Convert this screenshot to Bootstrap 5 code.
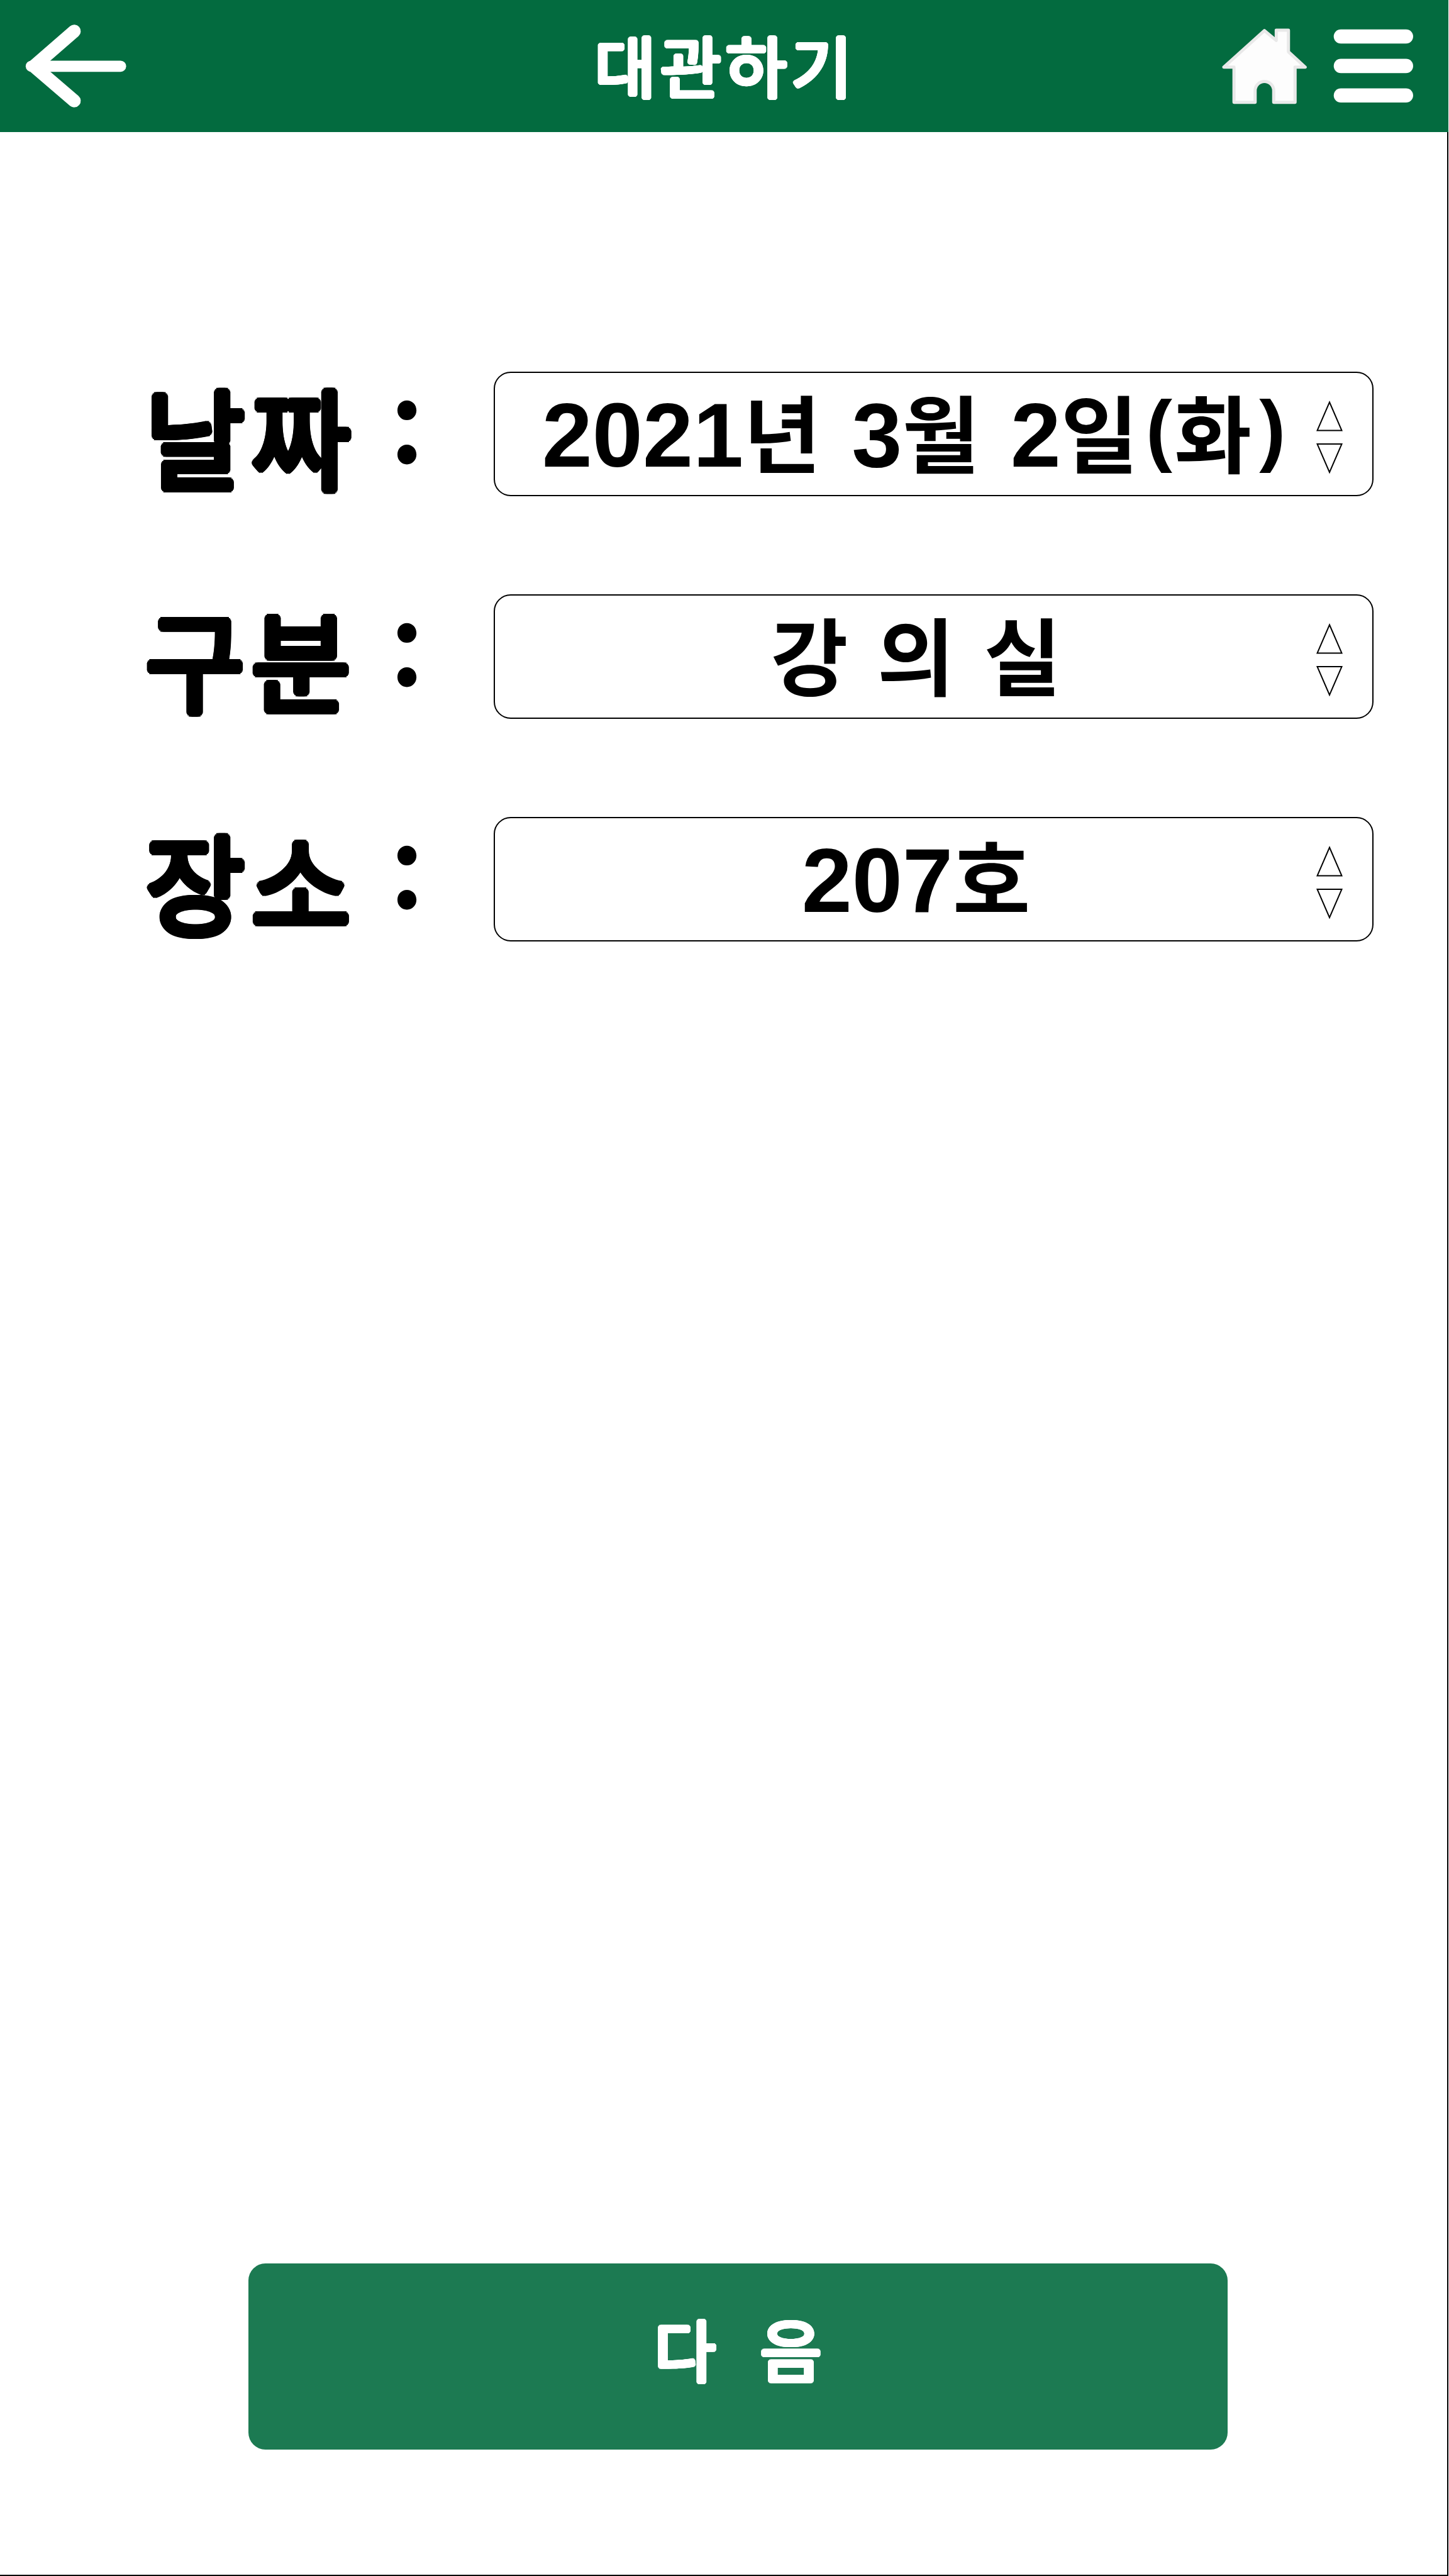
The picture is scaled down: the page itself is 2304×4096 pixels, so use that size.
<!DOCTYPE html>
<html lang="ko">
<head>
<meta charset="utf-8">
<meta name="viewport" content="width=device-width, initial-scale=1">
<title>대관하기</title>
<link rel="stylesheet" href="https://cdn.jsdelivr.net/npm/bootstrap@5.3.0/dist/css/bootstrap.min.css">
<style>
  body { font-family: "Noto Sans CJK KR", sans-serif; color: #000; background: #fff; }
  .screen { height: 4096px; width: 2303px; }
  .topbar { height: 210px; background: #036b3f; padding: 0 56px 0 37px; flex: none; }
  .topbar-side { flex: 1 1 0; }
  .topbar-title { font-size: 106px; letter-spacing: 6.5px; line-height: 203px; height: 210px; margin-left: 23px; }
  .content { border-right: 2px solid #000; border-bottom: 2px solid #000; padding: 381px 117px 199px 229px; }
  .form-rows { gap: 156px; }
  /* Rounded lettering: a regular weight thickened evenly in every direction */
  .soft-bold {
    --r: 6px; --d: calc(var(--r) * .707); --a: calc(var(--r) * .924); --b: calc(var(--r) * .383);
    font-weight: 400;
    text-shadow: var(--r) 0, calc(var(--r) * -1) 0, 0 var(--r), 0 calc(var(--r) * -1),
      var(--d) var(--d), calc(var(--d) * -1) var(--d), var(--d) calc(var(--d) * -1), calc(var(--d) * -1) calc(var(--d) * -1),
      var(--a) var(--b), calc(var(--a) * -1) var(--b), var(--a) calc(var(--b) * -1), calc(var(--a) * -1) calc(var(--b) * -1),
      var(--b) var(--a), calc(var(--b) * -1) var(--a), var(--b) calc(var(--a) * -1), calc(var(--b) * -1) calc(var(--a) * -1);
  }
  .soft-sm { --r: 3.4px; }
  .field-name { width: 388px; padding-left: 2px; font-size: 172px; letter-spacing: 10px; line-height: 198px; }
  .field-colon { width: 60px; margin-right: 108px; margin-bottom: 14px; font-size: 142px; font-weight: 900; line-height: 142px; }
  .picker { height: 198px; border: 2px solid #000; border-radius: 27px; padding: 0 47px 0 42px; background: #fff; }
  .picker-value { font-family: "Liberation Sans", "Noto Sans CJK KR", sans-serif; font-size: 144px; font-weight: 700; line-height: 188px; padding-top: 6px; }
  .value-date { margin-right: 13px; }
  .hangul { font-size: 134px; letter-spacing: 9px; word-spacing: -9px; line-height: 0; }
  .paren { font-size: 126px; vertical-align: 16px; padding: 0 3px; line-height: 0; }
  .stepper { width: 42px; height: 121px; margin-top: 10px; flex: none; }
  .next-btn { width: 1557px; height: 296px; margin-left: 166px; border: 0; border-radius: 27px; background: #1c7a52; color: #fff; font-size: 107px; word-spacing: 5px; line-height: 267px; padding: 0 0 29px; }
  .next-btn:hover { background: #1c7a52; color: #fff; }
</style>
</head>
<body>
<div class="screen d-flex flex-column">
  <header class="topbar d-flex align-items-center text-white">
    <div class="topbar-side d-flex">
      <svg width="168" height="140" viewBox="48 45.4 218.75 182.3" fill="none" stroke="#fff" stroke-linecap="round" stroke-linejoin="round" aria-label="뒤로">
        <path stroke-width="23" d="M64.5 137H249.5"/>
        <path stroke-width="27" d="M153.5 64.5L70 137L153.5 208.5"/>
      </svg>
    </div>
    <h1 class="topbar-title soft-bold soft-sm mb-0 text-nowrap">대관하기</h1>
    <div class="topbar-side d-flex justify-content-end align-items-center">
      <svg width="306" height="130" viewBox="2528 52.3 398.44 169.27" aria-label="홈, 메뉴">
        <path fill="#fdfdfd" stroke="#e9e9e9" stroke-width="6.5" stroke-linejoin="round" d="M2618.5 63.5L2643 84V62.7H2668.3V107.5L2703 139.3H2682V212H2637.7V188A19.2 19.2 0 0 0 2599.3 188V212H2555.5V139.3H2534.3Z"/>
        <g fill="#fff">
          <rect x="2762" y="61" width="164.4" height="29.5" rx="14.7"/>
          <rect x="2762" y="122" width="164.4" height="29.5" rx="14.7"/>
          <rect x="2762" y="183" width="164.4" height="29.5" rx="14.7"/>
        </g>
      </svg>
    </div>
  </header>

  <main class="content flex-grow-1 d-flex flex-column justify-content-between">
    <div class="form-rows d-flex flex-column">
      <div class="d-flex align-items-center">
        <div class="field-name soft-bold text-nowrap">날짜</div>
        <div class="field-colon text-center">:</div>
        <div class="picker flex-grow-1 d-flex align-items-center">
          <div class="picker-value value-date flex-grow-1 text-center text-nowrap">2021<span class="hangul">년</span> 3<span class="hangul">월</span> 2<span class="hangul">일</span><span class="paren">(</span><span class="hangul">화</span><span class="paren">)</span></div>
          <svg class="stepper" viewBox="0 0 42 121" fill="none" stroke="#000" stroke-width="2"><path d="M21 4.5L40.5 49.5H1.5ZM1.5 71H40.5L21 116Z"/></svg>
        </div>
      </div>
      <div class="d-flex align-items-center">
        <div class="field-name soft-bold text-nowrap">구분</div>
        <div class="field-colon text-center">:</div>
        <div class="picker flex-grow-1 d-flex align-items-center">
          <div class="picker-value flex-grow-1 text-center text-nowrap"><span class="hangul">강 의 실</span></div>
          <svg class="stepper" viewBox="0 0 42 121" fill="none" stroke="#000" stroke-width="2"><path d="M21 4.5L40.5 49.5H1.5ZM1.5 71H40.5L21 116Z"/></svg>
        </div>
      </div>
      <div class="d-flex align-items-center">
        <div class="field-name soft-bold text-nowrap">장소</div>
        <div class="field-colon text-center">:</div>
        <div class="picker flex-grow-1 d-flex align-items-center">
          <div class="picker-value flex-grow-1 text-center text-nowrap">207<span class="hangul">호</span></div>
          <svg class="stepper" viewBox="0 0 42 121" fill="none" stroke="#000" stroke-width="2"><path d="M21 4.5L40.5 49.5H1.5ZM1.5 71H40.5L21 116Z"/></svg>
        </div>
      </div>
    </div>
    <button type="button" class="btn next-btn soft-bold soft-sm">다&nbsp;&nbsp;음</button>
  </main>
</div>
<script src="https://cdn.jsdelivr.net/npm/bootstrap@5.3.0/dist/js/bootstrap.bundle.min.js"></script>
</body>
</html>
